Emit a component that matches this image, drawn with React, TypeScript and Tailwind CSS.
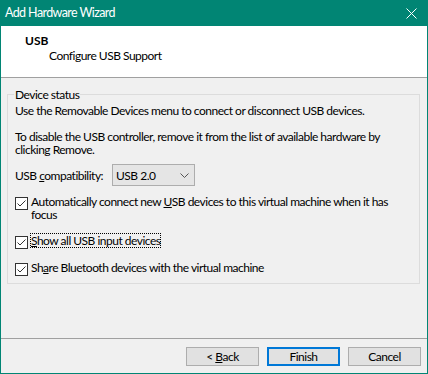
import type { ReactNode } from 'react';

function Check() {
  return (
    <span className="mt-[2px] flex h-[13px] w-[13px] shrink-0 items-center justify-center border border-[#333] bg-white">
      <svg width="11" height="11" viewBox="0 0 11 11" fill="none">
        <path d="M1.5 5.5 L4 8 L9.5 2.5" stroke="#333" strokeWidth="1" />
      </svg>
    </span>
  );
}

function CheckRow({ children, focused = false, className = '' }: { children: ReactNode; focused?: boolean; className?: string }) {
  return (
    <div className={`flex items-start gap-[3px] ${className}`}>
      <Check />
      <span className={`whitespace-nowrap ${focused ? '-m-px border border-dotted border-black' : ''}`}>{children}</span>
    </div>
  );
}

function Button({ children, primary = false }: { children: ReactNode; primary?: boolean }) {
  return (
    <button
      className={`flex h-[19px] w-[73px] items-center justify-center bg-[#e1e1e1] leading-[13px] ${
        primary ? 'border-2 border-[#0078d7]' : 'border border-[#adadad]'
      }`}
    >
      <span className="whitespace-pre">{children}</span>
    </button>
  );
}

export default function App() {
  return (
    <div className="flex h-[374px] w-[428px] flex-col bg-[#018574] px-px pb-px font-['Lato',sans-serif] text-[12px] tracking-[-0.5px] text-black">
      <div className="flex h-[26px] shrink-0 items-center justify-between pl-[4px] pr-[10px] text-[12.5px] tracking-[-0.6px] text-white">
        <span>Add Hardware Wizard</span>
        <svg width="11" height="11" viewBox="0 0 11 11" fill="none">
          <path d="M0.5 0.5 L10.5 10.5 M10.5 0.5 L0.5 10.5" stroke="white" strokeWidth="1" />
        </svg>
      </div>

      <div className="flex flex-1 flex-col bg-[#f0f0f0]">
        <div className="h-[52px] shrink-0 border-b border-[#a0a0a0] bg-white pt-[7px] leading-[15px]">
          <div className="pl-[24px] font-bold tracking-normal">USB</div>
          <div className="pl-[48px]">Configure USB Support</div>
        </div>

        <div className="flex-1 pt-[16px]">
          <div className="relative ml-[6px] mr-[7px] h-[190px] border border-[#dcdcdc] pl-[7px] pt-[9px] leading-[13px]">
            <span className="absolute -top-[8px] left-[6px] bg-[#f0f0f0] px-px leading-[15px]">Device status</span>
            <p className="whitespace-nowrap">Use the Removable Devices menu to connect or disconnect USB devices.</p>
            <p className="mt-[13px] whitespace-nowrap">
              To disable the USB controller, remove it from the list of available hardware by
              <br />
              clicking Remove.
            </p>
            <div className="mt-[8px] flex items-center">
              <span className="w-[97px] whitespace-nowrap">
                USB <u>c</u>ompatibility:
              </span>
              <div className="flex h-[22px] w-[83px] items-center justify-between border border-[#adadad] bg-[#e5e5e5] pl-[3px] pr-[5px]">
                <span>USB 2.0</span>
                <svg width="9" height="5" viewBox="0 0 9 5" fill="none">
                  <path d="M0.5 0.5 L4.5 4.5 L8.5 0.5" stroke="#555" strokeWidth="1" />
                </svg>
              </div>
            </div>
            <CheckRow className="mt-[9px]">
              Automatically connect new <u>U</u>SB devices to this virtual machine when it has
              <br />
              focus
            </CheckRow>
            <CheckRow className="mt-[13px]" focused>
              <u>S</u>how all USB input devices
            </CheckRow>
            <CheckRow className="mt-[12px]">
              Sh<u>a</u>re Bluetooth devices with the virtual machine
            </CheckRow>
          </div>
        </div>

        <div className="flex h-[35px] shrink-0 justify-end gap-[8px] border-t border-[#a0a0a0] pr-[6px] pt-[8px]">
          <Button>
            {'< '}
            <u>B</u>ack
          </Button>
          <Button primary>Finish</Button>
          <Button>Cancel</Button>
        </div>
      </div>
    </div>
  );
}
